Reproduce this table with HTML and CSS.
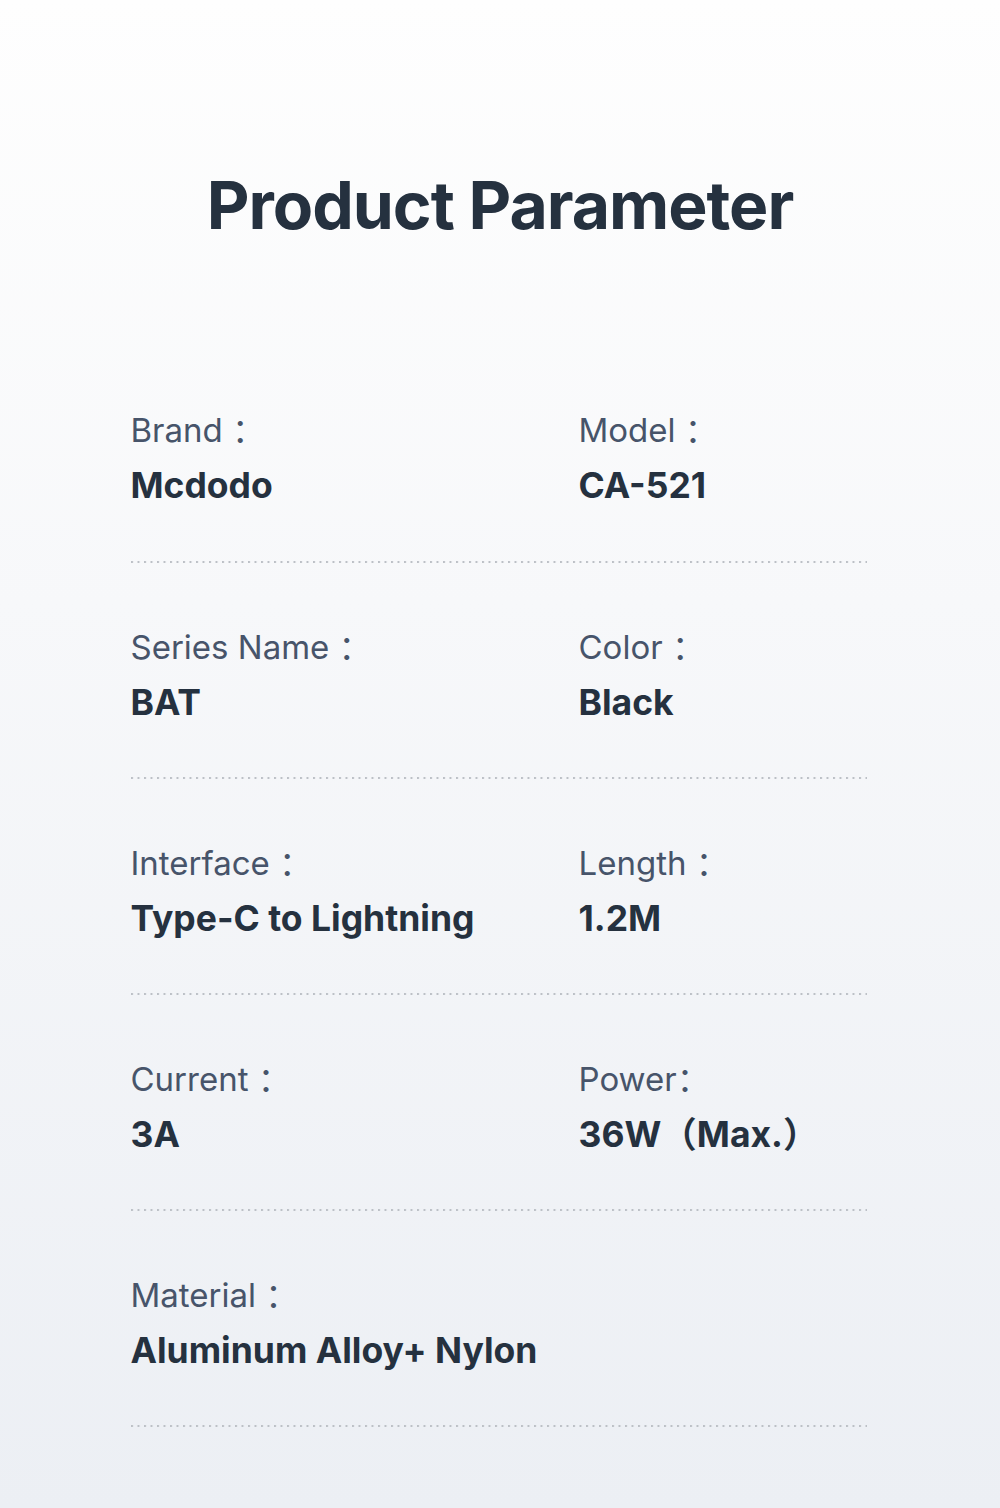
FILE: index.html
```html
<!DOCTYPE html>
<html lang="en">
<head>
<meta charset="utf-8">
<link rel="stylesheet" href="styles.css">
</head>
<body>
<main class="page">
  <h1 class="title">Product Parameter</h1>
  <section class="params">
    <div class="row">
      <div class="cell"><div class="label">Brand ：</div><div class="value">Mcdodo</div></div>
      <div class="cell"><div class="label">Model ：</div><div class="value">CA-521</div></div>
    </div>
    <div class="row">
      <div class="cell"><div class="label">Series Name ：</div><div class="value">BAT</div></div>
      <div class="cell"><div class="label">Color ：</div><div class="value">Black</div></div>
    </div>
    <div class="row">
      <div class="cell"><div class="label">Interface ：</div><div class="value">Type-C to Lightning</div></div>
      <div class="cell"><div class="label">Length ：</div><div class="value">1.2M</div></div>
    </div>
    <div class="row">
      <div class="cell"><div class="label">Current ：</div><div class="value">3A</div></div>
      <div class="cell"><div class="label">Power：</div><div class="value">36W（Max.）</div></div>
    </div>
    <div class="row">
      <div class="cell"><div class="label">Material ：</div><div class="value">Aluminum Alloy+ Nylon</div></div>
    </div>
  </section>
</main>
</body>
</html>
```
FILE: styles.css
```css
* { box-sizing: border-box; }
html, body { margin: 0; padding: 0; }
body {
  width: 1000px;
  height: 1508px;
  background: linear-gradient(180deg, #fefefe 0%, #f7f8fa 40%, #eceff4 100%);
  font-family: "Inter", "Noto Sans CJK SC", sans-serif;
  color: #25313f;
}
.page {
  display: flex;
  flex-direction: column;
  align-items: center;
  padding-top: 163px;
}
.title {
  margin: 0;
  font-size: 66px;
  font-weight: 700;
  line-height: 84px;
  color: #25313f;
  letter-spacing: -1px;
}
.params {
  width: 736px;
  margin-top: 99px;
  margin-left: -3px;
}
.row {
  display: grid;
  grid-template-columns: 448px 1fr;
  height: 216px;
  padding-top: 62px;
  background-image: radial-gradient(circle at 1px 1px, #bcc0c6 1px, rgba(188,192,198,0) 1.5px);
  background-size: 6.5px 2px;
  background-repeat: repeat-x;
  background-position: 0 100%;
  padding-bottom: 2px;
}
.row:first-child {
  height: 217px;
}
.cell {
  display: flex;
  flex-direction: column;
}
.label {
  font-size: 33px;
  line-height: 44px;
  font-weight: 400;
  color: #47546a;
}
.value {
  margin-top: 12px;
  font-size: 35.5px;
  line-height: 44px;
  font-weight: 700;
  color: #25313f;
}
```
